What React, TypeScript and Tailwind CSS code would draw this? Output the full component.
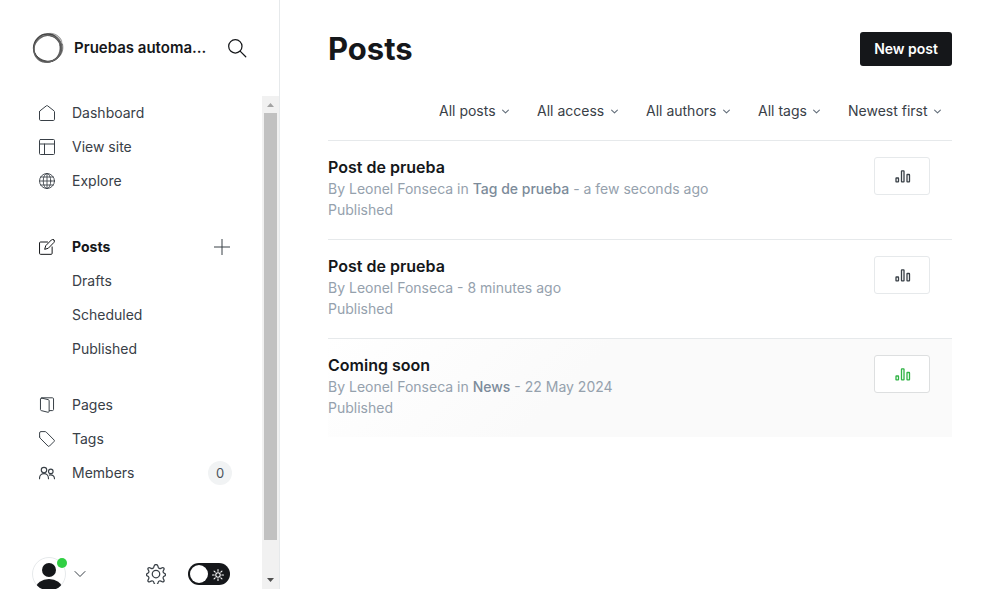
import type { ReactNode, SVGProps } from 'react';

function Svg(props: SVGProps<SVGSVGElement>) {
  return (
    <svg
      viewBox="0 0 24 24"
      fill="none"
      stroke="currentColor"
      strokeWidth="1.5"
      strokeLinecap="round"
      strokeLinejoin="round"
      aria-hidden="true"
      className="size-4 shrink-0"
      {...props}
    />
  );
}

const HomeIcon = () => (
  <Svg>
    <path d="M.75 10.1v11.4c0 1 .7 1.75 1.7 1.75h19.1c1 0 1.7-.75 1.7-1.75V10.1c0-.5-.25-1-.7-1.3L12.9 1.2a1.6 1.6 0 0 0-1.8 0L1.45 8.8c-.45.3-.7.8-.7 1.3z" />
  </Svg>
);

const SiteIcon = () => (
  <Svg>
    <rect x=".75" y=".75" width="22.5" height="22.5" rx="1.5" />
    <path d="M.75 7.5h22.5M8.25 7.5v15.75" />
  </Svg>
);

const GlobeIcon = () => (
  <Svg strokeWidth="1.3">
    <circle cx="12" cy="12" r="11.25" />
    <ellipse cx="12" cy="12" rx="5.6" ry="11.25" />
    <path d="M12 .75v22.5M.75 12h22.5M2.5 6h19M2.5 18h19" />
  </Svg>
);

const PostIcon = () => (
  <Svg>
    <path d="M22.4 1.4a2.7 2.7 0 0 0-3.8 0l-8.5 8.7-1.6 5.4 5.4-1.6 8.5-8.7a2.7 2.7 0 0 0 0-3.8z" />
    <path d="M12.8 4.5H2.3A1.5 1.5 0 0 0 .8 6v15.5a1.5 1.5 0 0 0 1.5 1.5h15.9a1.5 1.5 0 0 0 1.5-1.5v-9.6" />
  </Svg>
);

const PagesIcon = () => (
  <Svg>
    <path d="M3.7 1.6 14 4c.8.2 1.2.8 1.2 1.5v16c0 1-.8 1.6-1.7 1.4L3.4 20.4c-.7-.2-1.2-.8-1.2-1.5V2.8c0-.8.7-1.4 1.5-1.2z" />
    <path d="M5 1.2h15.2c.9 0 1.6.7 1.6 1.6v16c0 .9-.7 1.6-1.6 1.6h-4.5" />
  </Svg>
);

const TagIcon = () => (
  <Svg>
    <path d="M.9 8.9V3A2.1 2.1 0 0 1 3 .9h6.1c.7 0 1.3.3 1.8.8l11.7 11.8a1.6 1.6 0 0 1 0 2.2l-6.9 6.9a1.6 1.6 0 0 1-2.2 0L1.7 10.7a2.5 2.5 0 0 1-.8-1.8z" />
  </Svg>
);

const MembersIcon = () => (
  <Svg strokeWidth="1.7">
    <circle cx="7.5" cy="7.6" r="4.1" />
    <path d="M.8 20.5v-.8a6.7 6.7 0 0 1 13.4 0v.8" />
    <circle cx="17.7" cy="9.6" r="3.4" />
    <path d="M15.6 15.2a5.6 5.6 0 0 1 7.6 5.3" />
  </Svg>
);

const PlusIcon = () => (
  <Svg strokeWidth="1.5" strokeLinecap="butt">
    <path d="M12 0v24M0 12h24" />
  </Svg>
);

const ChevronIcon = ({ className, strokeWidth = 1.8 }: { className: string; strokeWidth?: number }) => (
  <Svg viewBox="0 0 12 8" strokeWidth={strokeWidth} className={className}>
    <path d="M1 1.5 6 6.5 11 1.5" />
  </Svg>
);

const GearIcon = () => (
  <Svg className="size-5" strokeWidth="1.5">
    <circle cx="12" cy="12" r="4.5" />
    <path d="M14.18 2.27l.53 1.7a2.25 2.25 0 0 0 3.12 1.27l1.6-.8a1.59 1.59 0 0 1 2.13 2.13l-.8 1.6a2.25 2.25 0 0 0 1.27 3.12l.2.07a1.59 1.59 0 0 1 0 3.04l-.2.07a2.25 2.25 0 0 0-1.27 3.12l.8 1.6a1.59 1.59 0 0 1-2.13 2.13l-1.6-.8a2.25 2.25 0 0 0-3.12 1.27l-.53 1.4a2.28 2.28 0 0 1-4.36 0l-.53-1.4a2.25 2.25 0 0 0-3.12-1.27l-1.6.8a1.59 1.59 0 0 1-2.13-2.13l.8-1.6a2.25 2.25 0 0 0-1.27-3.12l-.2-.07a1.59 1.59 0 0 1 0-3.04l.2-.07a2.25 2.25 0 0 0 1.27-3.12l-.8-1.6a1.59 1.59 0 0 1 2.13-2.13l1.6.8a2.25 2.25 0 0 0 3.12-1.27l.53-1.7a2.28 2.28 0 0 1 4.36 0z" />
  </Svg>
);

const SunIcon = () => (
  <Svg className="pointer-events-none absolute top-1 right-1 size-4 p-px text-white" strokeWidth="1.8">
    <circle cx="12" cy="12" r="3.8" />
    <path d="M12 2.5v3M12 18.5v3M2.5 12h3M18.5 12h3M5.2 5.2l2 2M16.8 16.8l2 2M5.2 18.8l2-2M16.8 7.2l2-2" />
  </Svg>
);

const StatsIcon = () => (
  <Svg viewBox="0 0 16 16" strokeWidth="1.3" strokeLinecap="butt" className="ml-px size-4">
    <rect x="1" y="10" width="2.5" height="3.9" rx=".4" />
    <rect x="6.5" y="2.8" width="2.5" height="11.1" rx=".4" />
    <rect x="12" y="6.5" width="2.5" height="7.4" rx=".4" />
  </Svg>
);

const SiteLogo = () => (
  <svg viewBox="0 0 32 32" className="size-8 shrink-0" fill="none" stroke="#333" aria-hidden="true">
    <path d="M13 2.8c5-3 13-1.5 16.5 5.5l.5 4C27 7 22 3.5 13 2.8z" fill="#c4c4c4" stroke="#888" strokeWidth=".7" />
    <path d="M30.5 12c1.5 7-1.5 13-8.5 16.5 4.5-4 7-10 5.5-16z" fill="#999" stroke="#666" strokeWidth=".7" />
    <path d="M2.5 21C5 28 12 32 21 29c-7 1-14-1-18.5-8z" fill="#555" stroke="#333" strokeWidth=".7" />
    <circle cx="15.5" cy="16" r="13.9" strokeWidth="1.5" stroke="#444" />
    <ellipse cx="15.3" cy="16.5" rx="13.4" ry="13" strokeWidth="1.1" stroke="#555" />
    <ellipse cx="15.6" cy="16.6" rx="14.3" ry="13" transform="rotate(-38 16 16.6)" strokeWidth="1" stroke="#666" />
  </svg>
);

function NavItem({ icon, label, children, active = false }: { icon?: ReactNode; label: string; children?: ReactNode; active?: boolean }) {
  return (
    <li className="flex h-[34px] items-center justify-between pr-8 pl-[39px]">
      <a href="#" className={active ? 'flex items-center gap-[17px] font-bold text-[#15171a]' : 'flex items-center gap-[17px]'}>
        {icon ?? <span className="w-4" />}
        {label}
      </a>
      {children}
    </li>
  );
}

function Sidebar() {
  return (
    <aside className="flex h-screen w-[280px] shrink-0 flex-col border-r border-[#e6e9eb]">
      <header className="flex h-24 shrink-0 items-center pr-8 pl-8">
        <SiteLogo />
        <span className="ml-[10px] text-[15px] font-semibold whitespace-nowrap text-[#15171a]">Pruebas automa...</span>
        <button type="button" aria-label="Search" className="ml-auto text-[#15171a]">
          <Svg className="size-5" strokeWidth="1.5">
            <circle cx="10" cy="10" r="8" />
            <path d="m16 16 6.5 6.5" />
          </Svg>
        </button>
      </header>
      <div className="flex min-h-0 grow">
        <div className="min-w-0 grow overflow-hidden">
          <nav className="text-sm text-[#394047]">
            <ul>
              <NavItem icon={<HomeIcon />} label="Dashboard" />
              <NavItem icon={<SiteIcon />} label="View site" />
              <NavItem icon={<GlobeIcon />} label="Explore" />
            </ul>
            <ul className="mt-8">
              <NavItem icon={<PostIcon />} label="Posts" active>
                <button type="button" aria-label="New post">
                  <PlusIcon />
                </button>
              </NavItem>
              <NavItem label="Drafts" />
              <NavItem label="Scheduled" />
              <NavItem label="Published" />
            </ul>
            <ul className="mt-[22px]">
              <NavItem icon={<PagesIcon />} label="Pages" />
              <NavItem icon={<TagIcon />} label="Tags" />
              <NavItem icon={<MembersIcon />} label="Members">
                <span className="-mr-0.5 flex size-6 items-center justify-center rounded-full bg-[#f1f3f4] text-[13px] text-[#4b535b]">0</span>
              </NavItem>
            </ul>
          </nav>
          <footer className="mt-[67px] flex items-center pr-8 pl-8 text-[#394047]">
            <button type="button" aria-label="Account menu" className="flex items-center gap-2">
              <span className="relative size-[34px]">
                <svg viewBox="0 0 34 34" className="size-full" aria-hidden="true">
                  <clipPath id="avatar-clip">
                    <circle cx="17" cy="17" r="16.5" />
                  </clipPath>
                  <circle cx="17" cy="17" r="16.5" fill="#fff" stroke="#e6e9eb" />
                  <g clipPath="url(#avatar-clip)" fill="#15171a">
                    <circle cx="17" cy="13" r="7" />
                    <ellipse cx="17" cy="31" rx="13" ry="9" />
                  </g>
                </svg>
                <span className="absolute top-px -right-px size-[10px] rounded-full bg-[#30cf43]" />
              </span>
              <ChevronIcon className="h-2 w-3" strokeWidth={1} />
            </button>
            <a href="#" aria-label="Settings" className="ml-auto">
              <GearIcon />
            </a>
            <div className="relative ml-[22px] h-[22px] w-[42px]">
              <input type="checkbox" aria-label="Night shift" className="block size-full appearance-none rounded-full bg-[#15171a]" />
              <span className="pointer-events-none absolute top-0.5 left-0.5 size-[18px] rounded-full bg-white" />
              <SunIcon />
            </div>
          </footer>
        </div>
        <div aria-hidden="true" className="flex w-[17px] shrink-0 flex-col items-center bg-[#f1f1f1]">
          <svg viewBox="0 0 17 17" className="size-[17px] shrink-0" fill="#a3a3a3">
            <path d="M5 11h7l-3.5-4z" />
          </svg>
          <div className="w-[13px] grow bg-[#c1c1c1]" />
          <div className="h-8 shrink-0" />
          <svg viewBox="0 0 17 17" className="size-[17px] shrink-0" fill="#505050">
            <path d="M5 6h7l-3.5 4z" />
          </svg>
        </div>
      </div>
    </aside>
  );
}

const filters = [
  { label: 'Type', value: 'All posts' },
  { label: 'Access', value: 'All access' },
  { label: 'Author', value: 'All authors' },
  { label: 'Tag', value: 'All tags' },
  { label: 'Sort', value: 'Newest first' },
];

const posts = [
  { title: 'Post de prueba', tag: 'Tag de prueba', date: 'a few seconds ago', highlighted: false },
  { title: 'Post de prueba', tag: '', date: '8 minutes ago', highlighted: false },
  { title: 'Coming soon', tag: 'News', date: '22 May 2024', highlighted: true },
];

export default function App() {
  return (
    <div className="flex h-screen bg-white font-['Inter',sans-serif] text-[#15171a]">
      <Sidebar />
      <main className="min-w-0 grow overflow-auto px-12 pt-8">
        <header className="flex h-[34px] items-center justify-between">
          <h1 className="text-[31px] leading-8 font-bold">Posts</h1>
          <a href="#" className="flex h-[34px] items-center rounded-[3px] bg-[#15171a] px-[14px] text-sm font-semibold text-white">
            New post
          </a>
        </header>
        <div className="flex h-[74px] items-center justify-end gap-7 pt-4 pr-[11px] text-sm text-[#394047]">
          {filters.map((f) => (
            <div key={f.label} className="flex items-center gap-[6px]">
              <select aria-label={f.label} className="h-6 appearance-none bg-transparent">
                <option>{f.value}</option>
              </select>
              <ChevronIcon className="h-[5px] w-[7px] text-[#626d79]" />
            </div>
          ))}
        </div>
        <ol>
          {posts.map((post, i) => (
            <li
              key={i}
              className={
                post.highlighted
                  ? 'flex items-start justify-between border-t border-[#e6e9eb] bg-[linear-gradient(315deg,#fafafa_60%,#ffffff_100%)] pt-4 pr-[22px] pb-[19px]'
                  : 'flex items-start justify-between border-t border-[#e6e9eb] pt-4 pr-[22px] pb-[19px]'
              }
            >
              <div className="text-sm leading-[21px] text-[#95a1ad]">
                <h2 className="text-base leading-[21px] font-semibold text-[#15171a]">{post.title}</h2>
                <p>
                  By Leonel Fonseca {post.tag && <>in <span className="font-medium text-[#7c8b9a]">{post.tag}</span> </>}- {post.date}
                </p>
                <p>Published</p>
              </div>
              <a
                href="#"
                aria-label={`Analytics for ${post.title}`}
                className={
                  post.highlighted
                    ? 'flex h-[38px] w-14 items-center justify-center rounded-[3px] border border-[#dddfe0] bg-white text-[#30b345]'
                    : 'flex h-[38px] w-14 items-center justify-center rounded-[3px] border border-[#e6e9eb] bg-white text-[#394047]'
                }
              >
                <StatsIcon />
              </a>
            </li>
          ))}
        </ol>
      </main>
    </div>
  );
}
